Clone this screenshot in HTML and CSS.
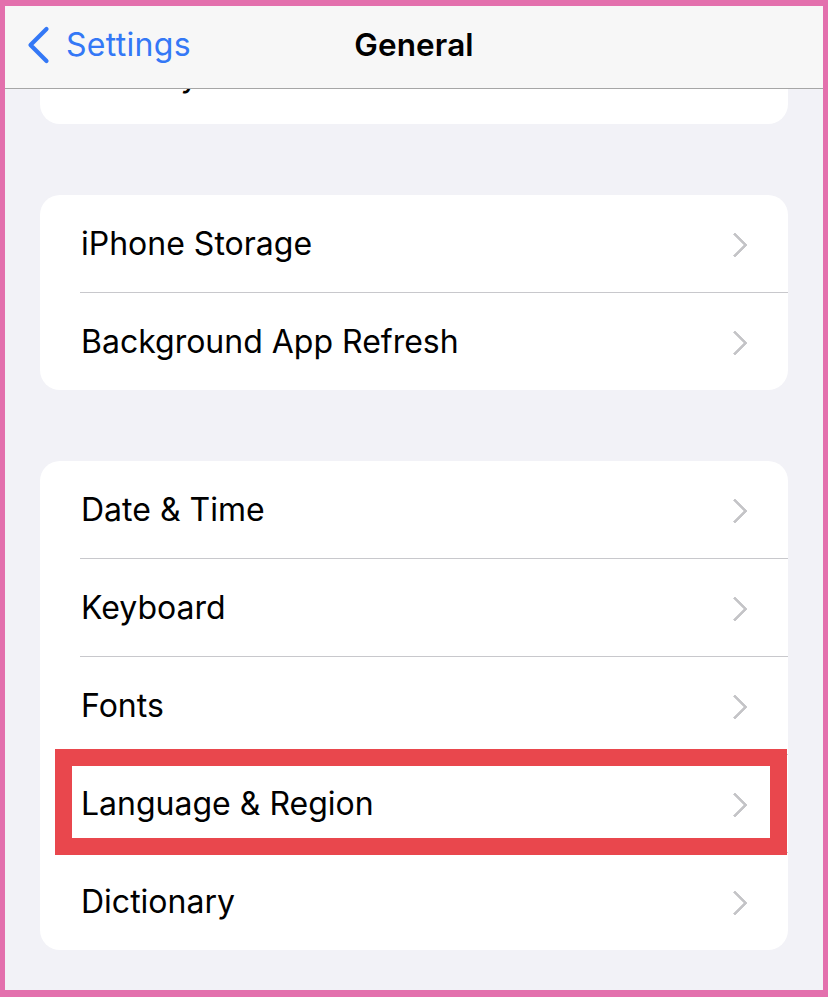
FILE: index.html
```html
<!DOCTYPE html>
<html lang="en">
<head>
<meta charset="utf-8">
<title>General</title>
<link rel="stylesheet" href="styles.css">
</head>
<body>
<div class="frame">
  <header class="navbar">
    <div class="back">
      <svg class="back-chev" width="24" height="38" viewBox="0 0 24 38"><path d="M20.5 3 L4.5 19 L20.5 35" fill="none" stroke="#3478f6" stroke-width="4.2" stroke-linecap="round" stroke-linejoin="round"/></svg>
      <span class="back-label">Settings</span>
    </div>
    <div class="title">General</div>
  </header>
  <main class="content">
    <section class="group group-first">
      <div class="row"><span class="label">CarPlay</span><span class="chev"></span></div>
    </section>
    <section class="group">
      <div class="row"><span class="label">iPhone Storage</span><span class="chev"></span></div>
      <div class="row"><span class="label">Background App Refresh</span><span class="chev"></span></div>
    </section>
    <section class="group">
      <div class="row"><span class="label">Date &amp; Time</span><span class="chev"></span></div>
      <div class="row"><span class="label">Keyboard</span><span class="chev"></span></div>
      <div class="row"><span class="label">Fonts</span><span class="chev"></span></div>
      <div class="row row-marked"><span class="label">Language &amp; Region</span><span class="chev"></span><span class="highlight"></span></div>
      <div class="row"><span class="label">Dictionary</span><span class="chev"></span></div>
    </section>
  </main>
</div>
</body>
</html>
```
FILE: styles.css
```css
* { box-sizing: border-box; }
html, body { margin: 0; padding: 0; }
body {
  font-family: Inter, "Noto Sans", "Liberation Sans", sans-serif;
  background: #e370ad;
  width: 828px;
  height: 997px;
  overflow: hidden;
}
.frame {
  position: relative;
  width: 828px;
  height: 997px;
  border-style: solid;
  border-color: #e370ad;
  border-width: 6px 5px 7px 5px;
  background: #f2f2f7;
  overflow: hidden;
}
.navbar {
  position: absolute;
  top: 0;
  left: 0;
  right: 0;
  height: 83px;
  background: #f7f7f7;
  border-bottom: 1px solid #a6a6a6;
  z-index: 5;
}
.back {
  position: absolute;
  left: 21px;
  top: 20px;
  display: flex;
  align-items: center;
  gap: 16px;
}
.back-chev { display: block; }
.back-label {
  color: #3478f6;
  font-size: 32px;
  letter-spacing: 0.3px;
  line-height: 38px;
}
.title {
  text-align: center;
  font-size: 31.5px;
  font-weight: 600;
  line-height: 38px;
  padding-top: 20px;
  color: #000;
  letter-spacing: 0.1px;
}
.content {
  padding: 21px 35px 0 35px;
  display: flex;
  flex-direction: column;
  gap: 71px;
}
.group {
  background: #fff;
  border-radius: 20px;
}
.row {
  position: relative;
  height: 97px;
  display: flex;
  align-items: center;
  padding: 0 42px 0 41px;
}
.row + .row { margin-top: 1px; }
.row + .row::before {
  content: "";
  position: absolute;
  top: -1px;
  left: 40px;
  right: 0;
  height: 1px;
  background: #c8c8cc;
}
.label {
  flex: 1;
  font-size: 32px;
  color: #000;
  letter-spacing: 0;
  line-height: 38px;
}
.chev {
  width: 13px;
  height: 23px;
  position: relative;
}
.chev::before {
  content: "";
  position: absolute;
  width: 15px;
  height: 15px;
  border-top: 3.4px solid #c4c4c7;
  border-right: 3.4px solid #c4c4c7;
  border-radius: 1px;
  transform: rotate(45deg);
  left: -7px;
  top: 4px;
}
.highlight {
  position: absolute;
  top: -6px;
  bottom: -3px;
  left: 15px;
  right: 1px;
  border: 17px solid #e9474d;
  pointer-events: none;
  z-index: 3;
}
```
